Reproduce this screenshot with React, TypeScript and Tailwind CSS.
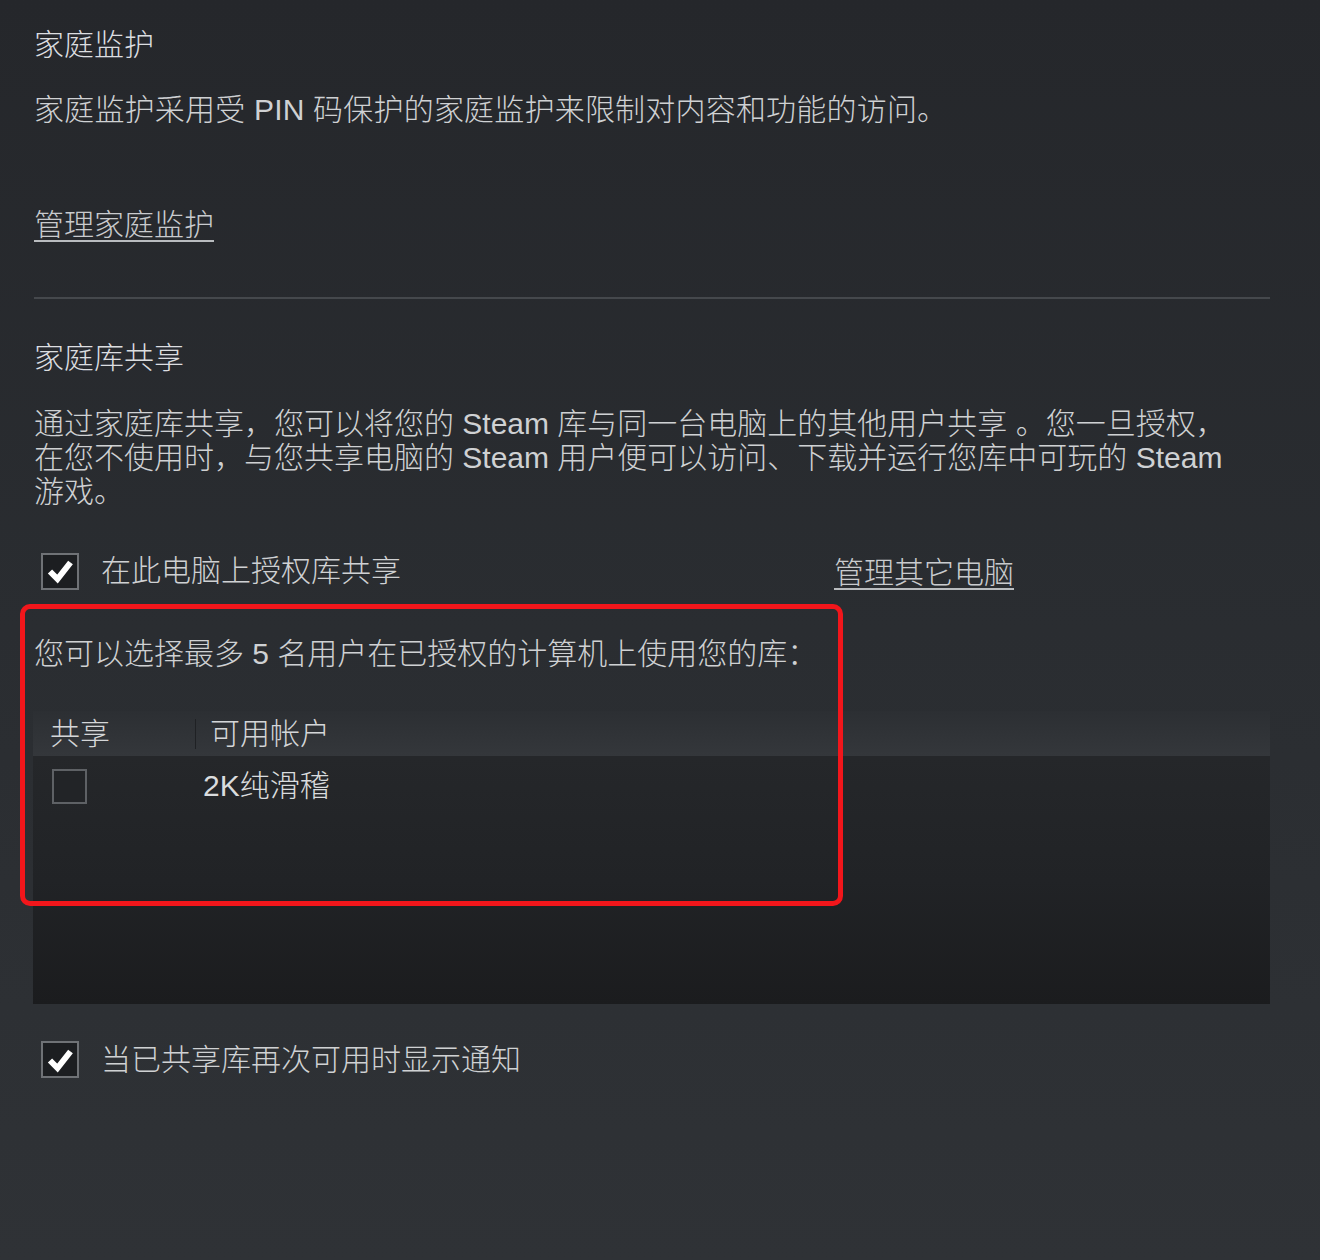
import type { ReactNode } from "react";

const FONT = {
  fontFamily: '"Liberation Sans", "Noto Sans CJK SC", sans-serif',
};

function CheckBox({ checked, size = "lg" }: { checked: boolean; size?: "lg" | "sm" }) {
  const box =
    size === "lg"
      ? "w-[38px] h-[37px] border-[2px] border-[#6f7276] bg-[#1c1e21]"
      : "w-[35px] h-[35px] border-[2px] border-[#5e6165] bg-[#222427]";
  return (
    <div className={`${box} flex items-center justify-center shrink-0`}>
      {checked && (
        <svg width="28" height="26" viewBox="0 0 28 26">
          <path
            d="M4 13.5 L11.5 21 L24.5 4.5"
            fill="none"
            stroke="#ffffff"
            strokeWidth="6"
            strokeLinejoin="miter"
          />
        </svg>
      )}
    </div>
  );
}

function LinkText({ children }: { children: ReactNode }) {
  return (
    <span className="underline underline-offset-[5px] decoration-[1.5px] decoration-[#b9bcbf] text-[#c9cbce] cursor-pointer">
      {children}
    </span>
  );
}

export default function App() {
  return (
    <div
      style={FONT}
      className="relative w-full min-h-[1260px] bg-gradient-to-b from-[#25272b] via-[#2a2d31] to-[#2f3236] text-[#cfd1d3] text-[30px] leading-[34px] font-light pl-[34px] pr-[50px] pt-[28px] overflow-hidden"
    >
      <h2 className="text-[#dcdee0] font-light">家庭监护</h2>
      <p className="mt-[31px] tracking-[0.2px]">
        家庭监护采用受 PIN 码保护的家庭监护来限制对内容和功能的访问。
      </p>

      <div className="mt-[81px]">
        <LinkText>管理家庭监护</LinkText>
      </div>

      <div className="mt-[55px] h-[2px] bg-[#45484c]" />

      <h2 className="mt-[42px] text-[#dcdee0] font-light">家庭库共享</h2>
      <p className="mt-[32px] whitespace-nowrap">
        通过家庭库共享，您可以将您的 Steam 库与同一台电脑上的其他用户共享 。您一旦授权，
        <br />
        在您不使用时，与您共享电脑的 Steam 用户便可以访问、下载并运行您库中可玩的 Steam
        <br />
        游戏。
      </p>

      <div className="mt-[43px] grid grid-cols-[800px_auto] items-center">
        <div className="flex items-center gap-[22px] pl-[7px]">
          <CheckBox checked />
          <span>在此电脑上授权库共享</span>
        </div>
        <div className="pt-[4px]">
          <LinkText>管理其它电脑</LinkText>
        </div>
      </div>

      <p className="mt-[47px]">您可以选择最多 5 名用户在已授权的计算机上使用您的库：</p>

      <div className="mt-[40px] -ml-[1px]">
        <div className="h-[45px] flex items-center bg-gradient-to-b from-[#2c2f33] to-[#34373b]">
          <div className="w-[162px] pl-[17px] text-[#d4d6d8]">共享</div>
          <div className="h-[30px] w-[1px] bg-[#1f2124]" />
          <div className="pl-[14px] text-[#d4d6d8]">可用帐户</div>
        </div>
        <div className="h-[248px] bg-gradient-to-b from-[#25272a] via-[#212326] to-[#1b1c1e]">
          <div className="flex items-center h-[60px]">
            <div className="w-[170px] pl-[19px]">
              <CheckBox checked={false} size="sm" />
            </div>
            <span className="text-[#dadcde]">2K纯滑稽</span>
          </div>
        </div>
      </div>

      <div className="mt-[37px] flex items-center gap-[22px] pl-[7px]">
        <CheckBox checked />
        <span>当已共享库再次可用时显示通知</span>
      </div>

      <div className="absolute left-[20px] top-[604px] w-[823px] h-[302px] border-[5px] border-[#f2161b] rounded-[10px] pointer-events-none" />
    </div>
  );
}
